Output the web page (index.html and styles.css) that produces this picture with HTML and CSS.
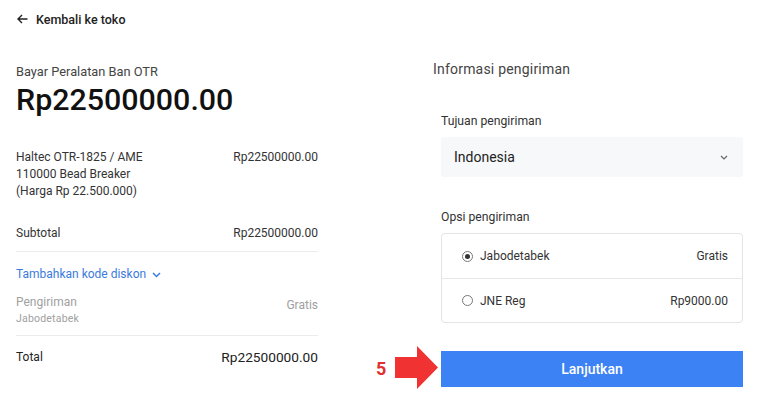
FILE: index.html
```html
<!DOCTYPE html>
<html lang="id">
<head>
<meta charset="utf-8">
<title>Checkout</title>
<link rel="stylesheet" href="styles.css">
</head>
<body>
<div class="page">
  <header class="topbar">
    <svg class="back-icon" width="11" height="10" viewBox="0 0 11 10"><path d="M10.5 5H1.2M5 1L1 5l4 4" fill="none" stroke="#222" stroke-width="1.4"/></svg>
    <span class="back-text">Kembali ke toko</span>
  </header>
  <div class="cols">
    <section class="summary">
      <div class="pay-title">Bayar Peralatan Ban OTR</div>
      <div class="pay-amount">Rp22500000.00</div>
      <div class="row item">
        <div class="item-name">Haltec OTR-1825 / AME<br>110000 Bead Breaker<br>(Harga Rp 22.500.000)</div>
        <div class="price">Rp22500000.00</div>
      </div>
      <div class="row subtotal">
        <div>Subtotal</div>
        <div class="price">Rp22500000.00</div>
      </div>
      <div class="discount">Tambahkan kode diskon
        <svg class="disc-chev" width="9" height="6" viewBox="0 0 9 6"><path d="M1 1l3.5 3.5L8 1" fill="none" stroke="#3a7be0" stroke-width="1.5"/></svg>
      </div>
      <div class="row shipping">
        <div>
          <div class="ship-label">Pengiriman</div>
          <div class="ship-sub">Jabodetabek</div>
        </div>
        <div class="ship-label ship-price">Gratis</div>
      </div>
      <div class="row total">
        <div>Total</div>
        <div class="total-price">Rp22500000.00</div>
      </div>
    </section>
    <section class="shipping-form">
      <h2 class="form-title">Informasi pengiriman</h2>
      <div class="form-body">
        <div class="field-label">Tujuan pengiriman</div>
        <div class="select">
          <span>Indonesia</span>
          <svg width="8" height="5" viewBox="0 0 8 5"><path d="M1 1l3 3 3-3" fill="none" stroke="#666" stroke-width="1.2"/></svg>
        </div>
        <div class="field-label opsi">Opsi pengiriman</div>
        <div class="options">
          <div class="option">
            <span class="radio checked"></span>
            <span class="opt-name">Jabodetabek</span>
            <span class="opt-price">Gratis</span>
          </div>
          <div class="option">
            <span class="radio"></span>
            <span class="opt-name">JNE Reg</span>
            <span class="opt-price">Rp9000.00</span>
          </div>
        </div>
        <div class="btn-wrap">
          <button class="btn">Lanjutkan</button>
          <div class="annot">
            <span class="annot-num">5</span>
            <svg width="44" height="44" viewBox="0 0 44 44"><path d="M0 11H22V0L43 21.5 22 43V32H0Z" fill="#f03232"/></svg>
          </div>
        </div>
      </div>
    </section>
  </div>
</div>
</body>
</html>
```

FILE: styles.css
```css
* { box-sizing: border-box; }
html, body { margin: 0; padding: 0; background: #fff; }
body {
  font-family: Roboto, "Liberation Sans", Arial, sans-serif;
  color: #222;
  width: 768px;
  height: 419px;
  overflow: hidden;
}
.page { padding: 0 25px 0 16px; }
.topbar {
  height: 38px;
  display: flex;
  align-items: center;
  padding-left: 1px;
}
.back-icon { margin-right: 8px; }
.back-text { font-size: 12.5px; font-weight: 500; color: #222; }

.cols { display: flex; }
.summary { width: 302px; }
.shipping-form { margin-left: 115px; flex: 1; }

.pay-title { margin-top: 25px; font-size: 12.8px; line-height: 18px; color: #444; }
.pay-amount { margin-top: 1px; font-size: 30.4px; line-height: 36px; font-weight: 500; color: #111; }

.row { display: flex; justify-content: space-between; }
.item { margin-top: 31px; font-size: 12px; line-height: 16.8px; color: #333; }
.price { font-size: 12px; color: #333; }
.subtotal {
  margin-top: 26px;
  font-size: 12px;
  line-height: 17px;
  color: #333;
  padding-bottom: 9px;
  border-bottom: 1px solid #ececec;
}
.discount {
  margin-top: 14px;
  font-size: 12px;
  line-height: 17px;
  color: #3a7be0;
  display: flex;
  align-items: center;
}
.disc-chev { margin-left: 6px; }
.shipping {
  margin-top: 12px;
  padding-bottom: 9px;
  border-bottom: 1px solid #ececec;
}
.ship-label { font-size: 12px; line-height: 15px; color: #a0a0a0; }
.ship-price { margin-top: 3px; }
.ship-sub { font-size: 10.5px; line-height: 14px; color: #a0a0a0; margin-top: 2px; letter-spacing: 0.2px; }
.total { margin-top: 13px; font-size: 12px; line-height: 17px; color: #222; align-items: center; }
.total-price { font-size: 13.7px; color: #222; }

.form-title {
  margin: 22px 0 0;
  font-size: 14px;
  font-weight: 400;
  line-height: 18px;
  color: #444;
  letter-spacing: 0.2px;
}
.form-body { padding-left: 8px; }
.field-label { margin-top: 35px; font-size: 12.2px; line-height: 17px; color: #333; }
.field-label.opsi { margin-top: 32px; }
.select {
  margin-top: 7px;
  height: 40px;
  background: #f7f8fa;
  border-radius: 3px;
  display: flex;
  align-items: center;
  justify-content: space-between;
  padding: 0 15px 0 13px;
  font-size: 14px;
  color: #222;
}
.options {
  margin-top: 7px;
  border: 1px solid #e4e4e4;
  border-radius: 4px;
}
.option {
  height: 44px;
  display: flex;
  align-items: center;
  padding: 0 14px 0 20px;
  font-size: 12px;
  color: #333;
}
.option + .option { border-top: 1px solid #e8e8e8; }
.radio {
  width: 11px;
  height: 11px;
  border: 1px solid #777;
  border-radius: 50%;
  margin-right: 7px;
  position: relative;
}
.radio.checked::after {
  content: "";
  position: absolute;
  left: 2px;
  top: 2px;
  width: 5px;
  height: 5px;
  border-radius: 50%;
  background: #333;
}
.opt-name { flex: 1; }
.opt-price { color: #333; }

.btn-wrap { margin-top: 28px; position: relative; }
.btn {
  width: 100%;
  height: 36px;
  border: none;
  background: #3d82f5;
  color: #fff;
  font-family: inherit;
  font-size: 14px;
  font-weight: 500;
  display: block;
}
.annot {
  position: absolute;
  left: -65px;
  top: -5px;
  display: flex;
  align-items: center;
}
.annot-num {
  font-size: 18px;
  font-weight: 700;
  color: #e03030;
  margin-right: 9px;
}
```
